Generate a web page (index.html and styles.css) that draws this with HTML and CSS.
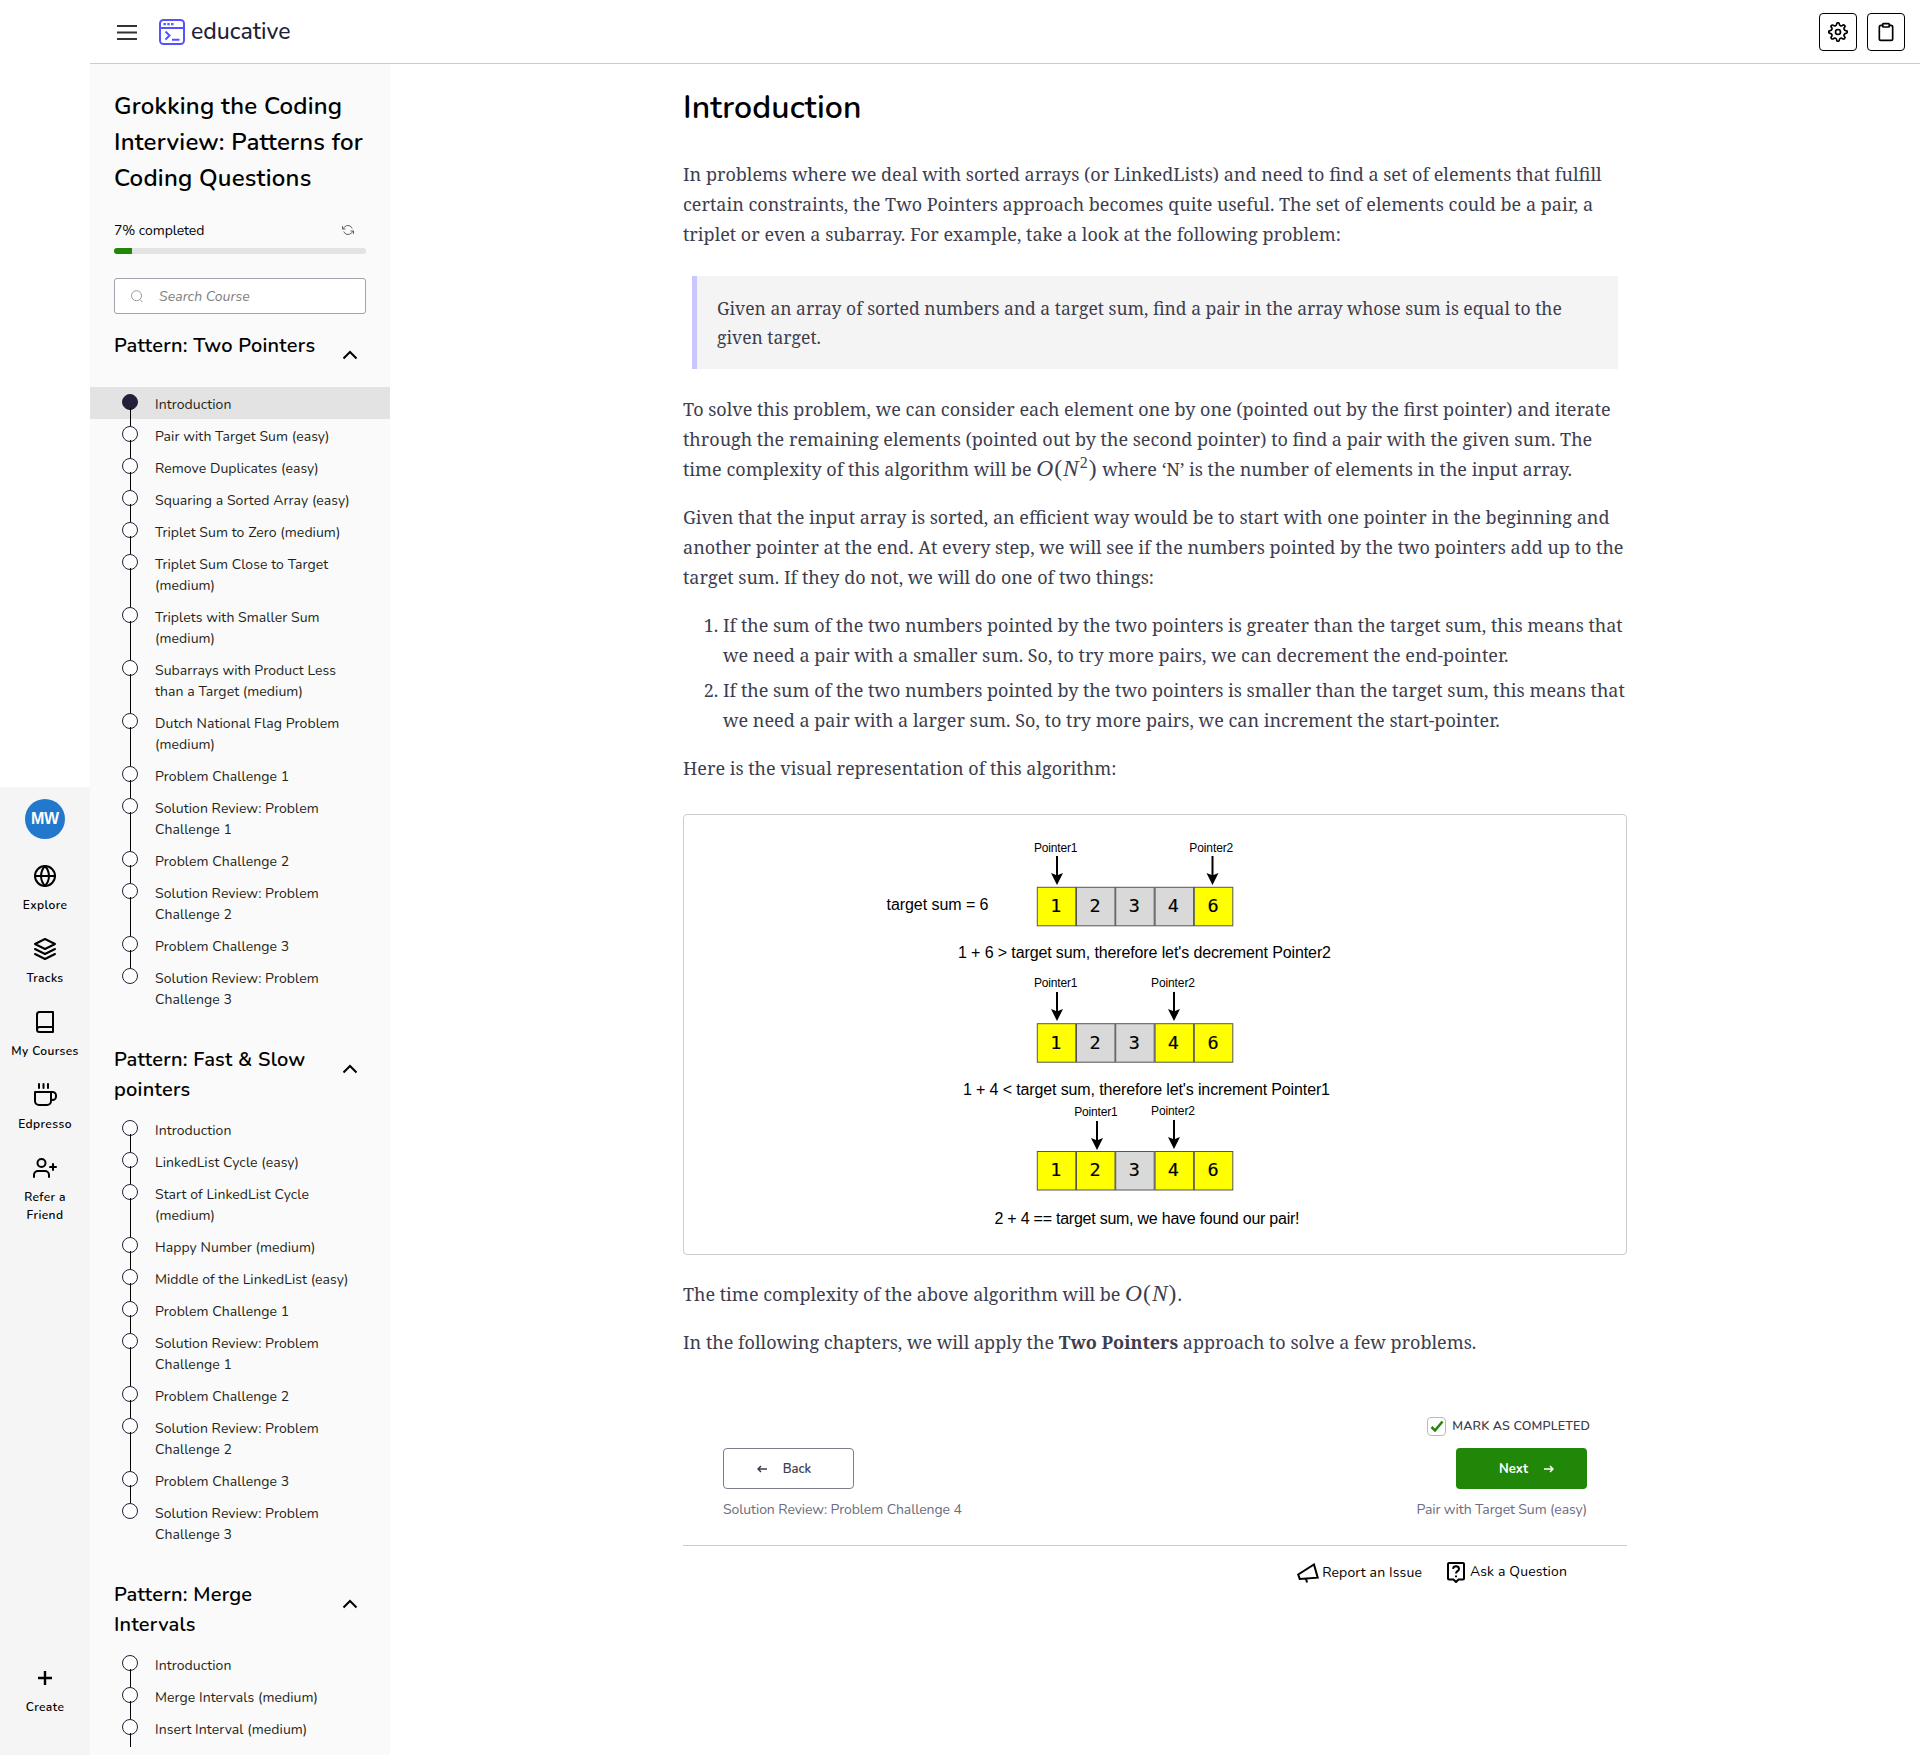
FILE: index.html
```html
<!DOCTYPE html>
<html lang="en">
<head>
<meta charset="utf-8">
<title>Introduction - Grokking the Coding Interview</title>
<link rel="stylesheet" href="styles.css">
</head>
<body>
<div class="app">
  <nav class="rail">
    <div class="avatar">MW</div>
    <a class="rail-item"><svg class="icon" viewBox="0 0 24 24"><circle cx="12" cy="12" r="10"/><path d="M2 12h20M12 2a15.3 15.3 0 0 1 4 10 15.3 15.3 0 0 1-4 10 15.3 15.3 0 0 1-4-10 15.3 15.3 0 0 1 4-10z"/></svg><span>Explore</span></a>
    <a class="rail-item"><svg class="icon" viewBox="0 0 24 24"><path d="M12 2 2 7l10 5 10-5-10-5zM2 17l10 5 10-5M2 12l10 5 10-5"/></svg><span>Tracks</span></a>
    <a class="rail-item"><svg class="icon" viewBox="0 0 24 24"><path d="M4 19.5A2.5 2.5 0 0 1 6.500 17H20M6.500 2H20v20H6.500A2.500 2.500 0 0 1 4 19.500v-15A2.500 2.500 0 0 1 6.500 2z"/></svg><span>My Courses</span></a>
    <a class="rail-item"><svg class="icon" viewBox="0 0 24 24"><path d="M2 9h16v9a4 4 0 0 1-4 4H6a4 4 0 0 1-4-4V9zM18 9h1.500a3.500 3.500 0 0 1 3.500 3.500v1a3.500 3.500 0 0 1-3.500 3.500H18M6 1v4M10.500 1v4M15 1v4"/></svg><span>Edpresso</span></a>
    <a class="rail-item"><svg class="icon" viewBox="0 0 24 24"><path d="M16 21v-2a4 4 0 0 0-4-4H5a4 4 0 0 0-4 4v2M20 8v6M23 11h-6"/><circle cx="8.500" cy="7" r="4"/></svg><span>Refer a Friend</span></a>
    <a class="rail-item rail-create"><svg class="icon" viewBox="0 0 24 24"><path d="M12 5v14M5 12h14"/></svg><span>Create</span></a>
  </nav>
  <div class="frame">
    <header class="topbar">
      <svg class="menu" viewBox="0 0 20 16"><path d="M0 2h20M0 8.500h20M0 15h20"/></svg>
      <svg class="logo" viewBox="0 0 26 26"><rect x="1" y="1" width="24" height="24" rx="3.500"/><path d="M1 9h24"/><path class="dots" d="M4.500 5.200h2.400M8.300 5.200h2.400M12.100 5.200h2.400"/><path d="m6.500 12.500 4 4-4 4M13 20.700h7.500"/></svg>
      <span class="brand">educative</span>
      <div class="tools">
        <button class="tool"><svg class="icon" viewBox="0 0 24 24"><circle cx="12" cy="12" r="3"/><path d="M10.400 2.500a1.600 1.600 0 0 1 3.200 0c.1 2 2.300 2.900 3.800 1.600a1.600 1.600 0 0 1 2.400 2.400c-1.300 1.500-.4 3.700 1.700 3.900a1.600 1.600 0 0 1 0 3.200c-2.100.2-3 2.400-1.700 3.900a1.600 1.600 0 0 1-2.400 2.400c-1.500-1.300-3.700-.4-3.800 1.600a1.600 1.600 0 0 1-3.200 0c-.1-2-2.300-2.900-3.800-1.600a1.600 1.600 0 0 1-2.400-2.400c1.300-1.500.4-3.700-1.700-3.900a1.600 1.600 0 0 1 0-3.200c2.100-.2 3-2.400 1.700-3.900a1.600 1.600 0 0 1 2.400-2.400c1.500 1.300 3.700.4 3.800-1.600z"/></svg></button>
        <button class="tool"><svg class="icon" viewBox="0 0 24 24"><path d="M16 4h2a2 2 0 0 1 2 2v14a2 2 0 0 1-2 2H6a2 2 0 0 1-2-2V6a2 2 0 0 1 2-2h2"/><rect x="8" y="2" width="8" height="4" rx="1"/></svg></button>
      </div>
    </header>
    <div class="columns">
      <aside class="sidebar">
        <h2 class="course">Grokking the Coding<br>Interview: Patterns for<br>Coding Questions</h2>
        <div class="progress-row"><span>7% completed</span><svg class="refresh" viewBox="0 0 24 24"><path d="M1 4v6h6M23 20v-6h-6M20.500 9A9 9 0 0 0 5.600 5.600L1 10M23 14l-4.600 4.400A9 9 0 0 1 3.500 15"/></svg></div>
        <div class="progress"><div class="progress-fill"></div></div>
        <div class="search"><svg viewBox="0 0 12 13"><circle cx="5.500" cy="5.700" r="5"/><path d="m9 9.500 2.500 2.700"/></svg><span>Search Course</span></div>

        <section class="chapter">
          <div class="chapter-head"><h3>Pattern: Two Pointers</h3><svg viewBox="0 0 16 10"><path d="m1.500 8.500 6.500-6.500 6.500 6.500"/></svg></div>
          <ul>
            <li class="current">Introduction</li>
            <li>Pair with Target Sum (easy)</li>
            <li>Remove Duplicates (easy)</li>
            <li>Squaring a Sorted Array (easy)</li>
            <li>Triplet Sum to Zero (medium)</li>
            <li>Triplet Sum Close to Target<br>(medium)</li>
            <li>Triplets with Smaller Sum<br>(medium)</li>
            <li>Subarrays with Product Less<br>than a Target (medium)</li>
            <li>Dutch National Flag Problem<br>(medium)</li>
            <li>Problem Challenge 1</li>
            <li>Solution Review: Problem<br>Challenge 1</li>
            <li>Problem Challenge 2</li>
            <li>Solution Review: Problem<br>Challenge 2</li>
            <li>Problem Challenge 3</li>
            <li class="last">Solution Review: Problem<br>Challenge 3</li>
          </ul>
        </section>
        <section class="chapter">
          <div class="chapter-head"><h3>Pattern: Fast &amp; Slow<br>pointers</h3><svg viewBox="0 0 16 10"><path d="m1.500 8.500 6.500-6.500 6.500 6.500"/></svg></div>
          <ul>
            <li>Introduction</li>
            <li>LinkedList Cycle (easy)</li>
            <li>Start of LinkedList Cycle<br>(medium)</li>
            <li>Happy Number (medium)</li>
            <li>Middle of the LinkedList (easy)</li>
            <li>Problem Challenge 1</li>
            <li>Solution Review: Problem<br>Challenge 1</li>
            <li>Problem Challenge 2</li>
            <li>Solution Review: Problem<br>Challenge 2</li>
            <li>Problem Challenge 3</li>
            <li class="last">Solution Review: Problem<br>Challenge 3</li>
          </ul>
        </section>
        <section class="chapter">
          <div class="chapter-head"><h3>Pattern: Merge<br>Intervals</h3><svg viewBox="0 0 16 10"><path d="m1.500 8.500 6.500-6.500 6.500 6.500"/></svg></div>
          <ul>
            <li>Introduction</li>
            <li>Merge Intervals (medium)</li>
            <li>Insert Interval (medium)</li>
          </ul>
        </section>
      </aside>

      <main class="lesson">
        <h1>Introduction</h1>
        <p>In problems where we deal with sorted arrays (or LinkedLists) and need to find a set of elements that fulfill<br>certain constraints, the Two Pointers approach becomes quite useful. The set of elements could be a pair, a<br>triplet or even a subarray. For example, take a look at the following problem:</p>
        <blockquote>Given an array of sorted numbers and a target sum, find a pair in the array whose sum is equal to the<br>given target.</blockquote>
        <p>To solve this problem, we can consider each element one by one (pointed out by the first pointer) and iterate<br>through the remaining elements (pointed out by the second pointer) to find a pair with the given sum. The<br>time complexity of this algorithm will be <span class="math"><i>O</i>(<i>N</i><sup>2</sup>)</span> where ‘N’ is the number of elements in the input array.</p>
        <p>Given that the input array is sorted, an efficient way would be to start with one pointer in the beginning and<br>another pointer at the end. At every step, we will see if the numbers pointed by the two pointers add up to the<br>target sum. If they do not, we will do one of two things:</p>
        <ol>
          <li>If the sum of the two numbers pointed by the two pointers is greater than the target sum, this means that<br>we need a pair with a smaller sum. So, to try more pairs, we can decrement the end-pointer.</li>
          <li>If the sum of the two numbers pointed by the two pointers is smaller than the target sum, this means that<br>we need a pair with a larger sum. So, to try more pairs, we can increment the start-pointer.</li>
        </ol>
        <p>Here is the visual representation of this algorithm:</p>
        <figure>
          <svg viewBox="684 815 942 438">
            <defs>
              <path id="arrow" d="M-1 0h2v19l5-2-6 12-6-12 5 2z"/>
              <rect id="cell" width="38.500" height="38.500"/>
            </defs>
            <g class="hint">
              <text x="1034" y="852" textLength="43.500">Pointer1</text><text x="1189.300" y="852" textLength="44">Pointer2</text>
              <text x="1034" y="987" textLength="43.500">Pointer1</text><text x="1151" y="987" textLength="44">Pointer2</text>
              <text x="1074.200" y="1116" textLength="43.500">Pointer1</text><text x="1151" y="1115" textLength="44">Pointer2</text>
            </g>
            <use href="#arrow" x="1057" y="856"/><use href="#arrow" x="1212.500" y="856"/>
            <use href="#arrow" x="1057" y="992"/><use href="#arrow" x="1174" y="992"/>
            <use href="#arrow" x="1097" y="1121"/><use href="#arrow" x="1174" y="1120"/>
            <g class="cells">
              <use href="#cell" class="on" x="1037.300" y="887.300"/><use href="#cell" x="1076.500" y="887.300"/><use href="#cell" x="1115.700" y="887.300"/><use href="#cell" x="1155.100" y="887.300"/><use href="#cell" class="on" x="1194.300" y="887.300"/>
              <use href="#cell" class="on" x="1037.300" y="1023.700"/><use href="#cell" x="1076.500" y="1023.700"/><use href="#cell" x="1115.700" y="1023.700"/><use href="#cell" class="on" x="1155.100" y="1023.700"/><use href="#cell" class="on" x="1194.300" y="1023.700"/>
              <use href="#cell" class="on" x="1037.300" y="1151.500"/><use href="#cell" class="on" x="1076.500" y="1151.500"/><use href="#cell" x="1115.700" y="1151.500"/><use href="#cell" class="on" x="1155.100" y="1151.500"/><use href="#cell" class="on" x="1194.300" y="1151.500"/>
            </g>
            <g class="digits">
              <text x="1055.700" y="912">1</text><text x="1095" y="912">2</text><text x="1134.400" y="912">3</text><text x="1173.400" y="912">4</text><text x="1213" y="912">6</text>
              <text x="1055.700" y="1048.500">1</text><text x="1095" y="1048.500">2</text><text x="1134.400" y="1048.500">3</text><text x="1173.400" y="1048.500">4</text><text x="1213" y="1048.500">6</text>
              <text x="1055.700" y="1176">1</text><text x="1095" y="1176">2</text><text x="1134.400" y="1176">3</text><text x="1173.400" y="1176">4</text><text x="1213" y="1176">6</text>
            </g>
            <g class="notes">
              <text x="886.500" y="910" textLength="102">target sum = 6</text>
              <text x="958" y="958" textLength="373">1 + 6 &gt; target sum, therefore let's decrement Pointer2</text>
              <text x="963" y="1095" textLength="367">1 + 4 &lt; target sum, therefore let's increment Pointer1</text>
              <text x="994.500" y="1224" textLength="305">2 + 4 == target sum, we have found our pair!</text>
            </g>
          </svg>
        </figure>
        <p>The time complexity of the above algorithm will be <span class="math"><i>O</i>(<i>N</i>)</span>.</p>
        <p>In the following chapters, we will apply the <b>Two Pointers</b> approach to solve a few problems.</p>

        <div class="pager">
          <div class="pager-side">
            <button class="btn back"><svg viewBox="0 0 10 8"><path d="M10 4H1M4 1 1 4l3 3"/></svg>Back</button>
            <span class="caption">Solution Review: Problem Challenge 4</span>
          </div>
          <div class="pager-side end">
            <label class="mark"><span class="box"><svg viewBox="0 0 14 12"><path d="m1.500 7 3.500 3.500 7.500-9"/></svg></span>MARK AS COMPLETED</label>
            <button class="btn next">Next<svg viewBox="0 0 10 8"><path d="M0 4h9M6 1l3 3-3 3"/></svg></button>
            <span class="caption">Pair with Target Sum (easy)</span>
          </div>
        </div>
        <div class="feedback">
          <a class="report"><svg viewBox="0 0 22 20"><path d="M1.200 11.500 17 1.500l3.700 13.200-18 1.200zM9 15.500l1 4"/></svg>Report an Issue</a>
          <a class="ask"><svg viewBox="0 0 18 21"><path d="M2 1h14a1 1 0 0 1 1 1v14.500a1 1 0 0 1-1 1h-4.500L9 20l-2.500-2.500H2a1 1 0 0 1-1-1V2a1 1 0 0 1 1-1zM6 6.800A3 3 0 0 1 9 4.300c1.800 0 3 1.100 3 2.600 0 2.200-3 2.300-3 4.600M9 13.500v1.700"/></svg>Ask a Question</a>
        </div>
      </main>
    </div>
  </div>
</div>
</body>
</html>
```
FILE: styles.css
```css
* { box-sizing: border-box; }
body { margin: 0; background: #fff; color: #000; font-family: Nunito, Lato, sans-serif; }
h1, h2, h3, ul, ol, p, figure, blockquote { margin: 0; padding: 0; }
svg { fill: none; stroke: currentColor; flex: none; display: block; }
button { font-family: inherit; padding: 0; }
.icon { width: 24px; height: 24px; stroke-width: 2; stroke-linecap: round; stroke-linejoin: round; }

.app { display: flex; height: 1755px; overflow: hidden; }

/* Left navigation rail */
.rail { width: 90px; margin-top: 787px; padding-top: 12px; background: #f5f5f5; display: flex; flex-direction: column; align-items: center; gap: 23px; }
.avatar { width: 40px; height: 40px; margin-bottom: 2px; border-radius: 50%; background: #2178cc; color: #fff; font: bold 16px/40px "Liberation Sans", sans-serif; letter-spacing: -0.3px; text-align: center; }
.rail-item { display: flex; flex-direction: column; align-items: center; gap: 8px; width: 76px; font-size: 12px; font-weight: 600; line-height: 18px; letter-spacing: 0.4px; text-align: center; }
.rail-item span { max-width: 70px; }
.rail-create { margin-top: auto; margin-bottom: 39px; }
.rail-create .icon { stroke-width: 2.400; stroke-linecap: butt; }

/* Top bar */
.frame { flex: 1; min-width: 0; display: flex; flex-direction: column; }
.topbar { height: 64px; flex: none; border-bottom: 1px solid #ccc; display: flex; align-items: center; padding: 0 15px 0 27px; }
.menu { width: 20px; height: 16px; color: #333; stroke-width: 2; }
.logo { width: 26px; height: 26px; margin-left: 22px; color: #5553ff; stroke-width: 2; }
.logo .dots { stroke-width: 2.200; }
.brand { margin-left: 6px; font-size: 23px; font-weight: 500; letter-spacing: 0; font-variant-ligatures: none; color: #231f38; line-height: 30px; }
.tools { margin-left: auto; display: flex; gap: 10px; }
.tool { width: 38px; height: 38px; border: 1px solid #000; border-radius: 4px; background: #fff; color: #000; display: flex; align-items: center; justify-content: center; }
.tool .icon { width: 20px; height: 20px; }

/* Course outline */
.columns { flex: 1; min-height: 0; display: flex; }
.sidebar { width: 300px; flex: none; background: #fafafa; padding-top: 24px; overflow: hidden; white-space: nowrap; }
.course { margin: 0 24px; font-size: 24px; font-weight: 600; line-height: 36px; letter-spacing: 0.23px; }
.progress-row { margin: 24px 24px 0; height: 20px; display: flex; justify-content: space-between; align-items: center; padding-right: 12px; font-size: 14px; letter-spacing: -0.08px; }
.refresh { width: 12px; height: 12px; color: #555; stroke-width: 1.800; }
.progress { margin: 8px 24px 0; height: 6px; border-radius: 3px; background: #e3e3e3; overflow: hidden; }
.progress-fill { width: 18px; height: 6px; background: #218709; }
.search { margin: 24px 24px 0; height: 36px; border: 1px solid #a3a3ae; border-radius: 3px; background: #fff; display: flex; align-items: center; padding-left: 16px; font-size: 14px; font-style: italic; color: #808080; letter-spacing: 0.05px; }
.search svg { width: 12px; height: 13px; margin-right: 16px; color: #999; }
.chapter { padding-top: 30px; }
.search + .chapter { padding-top: 16px; }
.chapter-head { display: flex; justify-content: space-between; min-height: 48px; margin: 0 32px 9px 24px; }
.chapter-head h3 { height: 60px; padding-top: 1px; margin-bottom: -12px; font-size: 20px; font-weight: 600; line-height: 30px; letter-spacing: 0.25px; }
.chapter + .chapter .chapter-head h3 { margin-bottom: 0; }
.chapter-head svg { width: 16px; height: 10px; margin-top: 20px; stroke-width: 2; }
.chapter ul { list-style: none; }
.chapter li { position: relative; padding: 6.500px 0 4.500px 65px; font-size: 14px; line-height: 21px; letter-spacing: 0.07px; color: #231f20; }
.chapter li::before { content: ""; position: absolute; left: 33px; top: 8px; width: 14px; height: 14px; margin: -1px 0 0 -1px; border: 1px solid #231f38; border-radius: 50%; background: #fff; }
.chapter li::after { content: ""; position: absolute; left: 40px; top: 21px; bottom: -7px; width: 1px; background: #000; z-index: 1; }
.chapter li.current { background: #e3e3e3; }
.chapter li.current::before { background: #231f38; }
.chapter li.last::after { display: none; }
.chapter:last-child li:last-child::after { bottom: -3px; }

/* Lesson text */
.lesson { width: 944px; margin-left: 293px; color: #3d3d4e; font-family: "Noto Serif", "DejaVu Serif", serif; font-size: 18px; line-height: 30px; white-space: nowrap; }
h1 { margin-top: 20px; margin-bottom: 27px; font: 600 32px/48px Nunito, Lato, sans-serif; letter-spacing: 0.15px; color: #000; }
p { margin-bottom: 18px; }
blockquote { margin: 27px 9px 25px; border-left: 5px solid #c8c8ff; background: #f4f4f4; padding: 17.500px 20px; font-size: 17.500px; line-height: 29px; }
ol { padding-left: 40px; margin-bottom: 17.500px; }
ol li + li { margin-top: 5px; }
.math { font-family: "Liberation Serif", serif; font-size: 23.500px; line-height: 0; letter-spacing: 1px; }
.math sup { font-size: 16px; line-height: 0; vertical-align: 8px; }
figure { margin: 31px 0 24px; height: 441px; border: 1px solid #ccc; border-radius: 4px; overflow: hidden; }
figure svg { width: 942px; height: 438px; fill: #000; stroke: none; font-family: "Liberation Sans", sans-serif; }
.hint { font-size: 12px; }
.notes { font-size: 16px; }
.digits { font-family: "DejaVu Sans Mono", monospace; font-size: 18.500px; text-anchor: middle; stroke: #000; stroke-width: 0.150; }
.cells { fill: #d9d9d9; stroke: #555; stroke-width: 1; }
.cells .on { fill: #ff0; }

/* Previous / next */
.pager { margin-top: 57px; padding: 0 40px; height: 132px; border-bottom: 1px solid #ccc; display: flex; justify-content: space-between; align-items: flex-start; font-family: Nunito, Lato, sans-serif; }
.pager-side { display: flex; flex-direction: column; align-items: flex-start; padding-top: 34px; }
.pager-side.end { align-items: flex-end; padding-top: 0; }
.mark { display: flex; align-items: center; gap: 6px; height: 25px; margin-bottom: 9px; margin-right: -3px; font-size: 12.500px; font-weight: 600; letter-spacing: 0.15px; }
.box { width: 19px; height: 19px; border: 1px solid #bbb; border-radius: 4px; display: flex; align-items: center; justify-content: center; color: #218709; }
.box svg { width: 14px; height: 12px; stroke-width: 2.500; }
.btn { width: 131px; height: 41px; border-radius: 4px; padding-top: 1px; display: flex; align-items: center; justify-content: center; gap: 16px; font-size: 13px; font-weight: 600; }
.btn svg { width: 10px; height: 8px; stroke-width: 1.500; }
.back { border: 1px solid #7d7d8e; background: #fff; color: #3d3d4e; padding-right: 9px; }
.next { border: 0; background: #218709; color: #fff; font-weight: 700; padding-left: 10px; }
.caption { margin-top: 11px; font-size: 14px; line-height: 20px; letter-spacing: -0.08px; color: #6b6b7e; }
.feedback { display: flex; justify-content: flex-end; align-items: flex-start; gap: 25px; padding: 16px 60px 0 0; font: 14px/20px Nunito, Lato, sans-serif; letter-spacing: 0.13px; color: #000; }
.feedback a { display: flex; align-items: center; gap: 5px; }
.feedback svg { stroke-width: 2; }
.feedback .report { padding-top: 1px; gap: 3px; }
.report svg { width: 22px; height: 20px; }
.ask svg { width: 18px; height: 21px; }
```
